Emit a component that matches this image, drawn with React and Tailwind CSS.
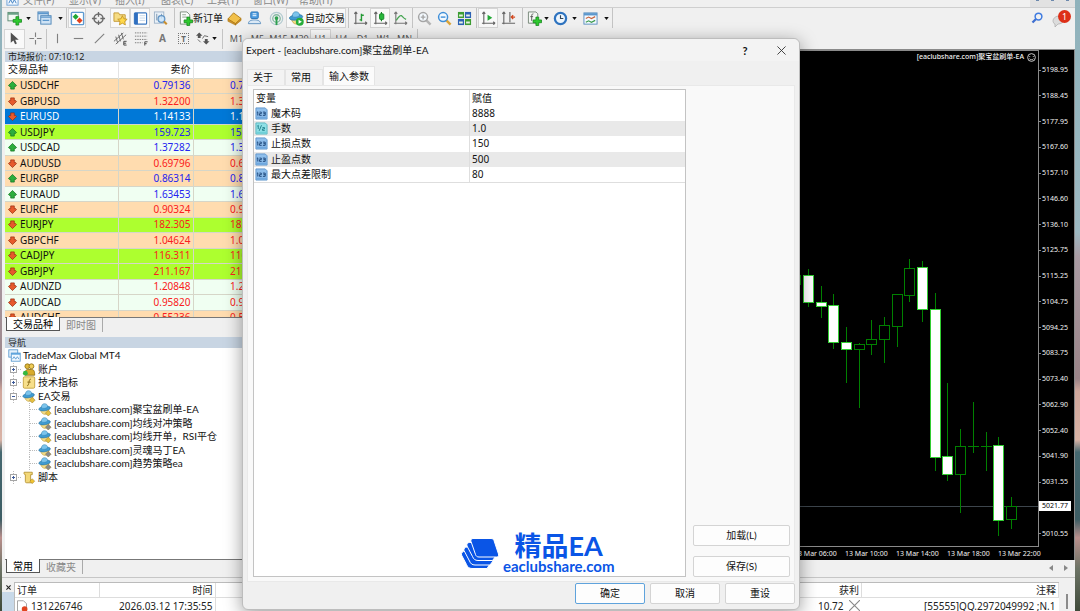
import { useState } from 'react'

const MENUS = ['文件(F)', '显示(V)', '插入(I)', '图表(C)', '工具(T)', '窗口(W)', '帮助(H)']

const TIMEFRAMES = ['M1', 'M5', 'M15', 'M30', 'H1', 'H4', 'D1', 'W1', 'MN']

const PEACH = 'bg-[#ffdcaf]'
const LIME = 'bg-[#adff2f]'
const MINT = 'bg-[#f0fff2]'

const QUOTES = [
  { symbol: 'USDCHF', bid: '0.79136', ask: '0.79161', up: true, bg: PEACH },
  { symbol: 'GBPUSD', bid: '1.32200', ask: '1.32219', up: false, bg: PEACH },
  { symbol: 'EURUSD', bid: '1.14133', ask: '1.14147', up: false, bg: 'bg-[#0078d7]', selected: true },
  { symbol: 'USDJPY', bid: '159.723', ask: '159.741', up: true, bg: LIME },
  { symbol: 'USDCAD', bid: '1.37282', ask: '1.37305', up: true, bg: MINT },
  { symbol: 'AUDUSD', bid: '0.69796', ask: '0.69814', up: false, bg: PEACH },
  { symbol: 'EURGBP', bid: '0.86314', ask: '0.86336', up: true, bg: PEACH },
  { symbol: 'EURAUD', bid: '1.63453', ask: '1.63492', up: true, bg: MINT },
  { symbol: 'EURCHF', bid: '0.90324', ask: '0.90351', up: false, bg: PEACH },
  { symbol: 'EURJPY', bid: '182.305', ask: '182.332', up: false, bg: LIME },
  { symbol: 'GBPCHF', bid: '1.04624', ask: '1.04661', up: false, bg: PEACH },
  { symbol: 'CADJPY', bid: '116.311', ask: '116.348', up: false, bg: LIME },
  { symbol: 'GBPJPY', bid: '211.167', ask: '211.204', up: false, bg: LIME },
  { symbol: 'AUDNZD', bid: '1.20848', ask: '1.20889', up: false, bg: MINT },
  { symbol: 'AUDCAD', bid: '0.95820', ask: '0.95853', up: false, bg: MINT },
  { symbol: 'AUDCHF', bid: '0.55236', ask: '0.55261', up: false, bg: PEACH },
]

const EXPERTS = [
  { name: '[eaclubshare.com]聚宝盆刷单-EA', active: true },
  { name: '[eaclubshare.com]均线对冲策略', active: false },
  { name: '[eaclubshare.com]均线开单，RSI平仓', active: true },
  { name: '[eaclubshare.com]灵魂马丁EA', active: false },
  { name: '[eaclubshare.com]趋势策略ea', active: false },
]

const PARAMS = [
  { name: '魔术码', value: '8888', type: 'int' },
  { name: '手数', value: '1.0', type: 'double' },
  { name: '止损点数', value: '150', type: 'int' },
  { name: '止盈点数', value: '500', type: 'int' },
  { name: '最大点差限制', value: '80', type: 'int' },
]

// null keeps the slot that the current price tag covers
const PRICES = [
  '5198.95', '5188.45', '5177.95', '5167.60', '5157.10', '5146.60', '5136.10', '5125.75', '5115.25',
  '5104.75', '5094.25', '5083.75', '5073.40', '5062.90', '5052.40', '5041.90', '5031.55', null, '5010.55',
]

const TIMES = ['13 Mar 06:00', '13 Mar 10:00', '13 Mar 14:00', '13 Mar 18:00', '13 Mar 22:00']

// [x, high, body top, body bottom, low, falling]
const CANDLES = [
  [-5, 222, 224, 233, 240, 0],
  [8, 218, 224, 251, 256, 1],
  [21, 235, 251, 255, 267, 1],
  [33, 243, 254, 291, 298, 1],
  [46, 276, 291, 298, 332, 1],
  [59, 292, 293, 298, 357, 0],
  [71, 269, 288, 293, 304, 0],
  [84, 266, 274, 288, 312, 0],
  [97, 243, 243, 275, 296, 0],
  [109, 208, 217, 244, 251, 0],
  [122, 210, 216, 258, 271, 1],
  [135, 242, 258, 406, 420, 1],
  [147, 332, 405, 423, 430, 1],
  [160, 378, 395, 423, 462, 0],
  [173, 351, 395, 395, 402, 0],
  [186, 381, 395, 395, 420, 0],
  [198, 386, 394, 469, 485, 1],
  [211, 446, 455, 468, 478, 0],
]

function Svg({ size = 'size-[15px]', children }) {
  return (
    <svg viewBox="0 0 16 16" className={`${size} shrink-0`} fill="none" aria-hidden="true">
      {children}
    </svg>
  )
}

function Plus({ x, y }) {
  return (
    <path
      transform={`translate(${x} ${y})`}
      d="M3 0h3v3h3v3H6v3H3V6H0V3h3z"
      fill="#2fc92f"
      stroke="#12861a"
      strokeWidth=".8"
    />
  )
}

const NewChartIcon = () => (
  <Svg>
    <rect x="1" y="1.500" width="11" height="9" fill="#f2f8f2" stroke="#5d8c74" />
    <path d="M1 3h11" stroke="#6aa286" strokeWidth="2" />
    <Plus x={6.5} y={6} />
  </Svg>
)

const ProfilesIcon = () => (
  <Svg>
    <rect x="1" y="1" width="11" height="9" fill="#dcebf8" stroke="#4f86b8" />
    <path d="M1 2.500h11" stroke="#5c97cc" strokeWidth="2" />
    <rect x="4" y="5" width="11" height="9" fill="#cfe3f5" stroke="#4f86b8" />
    <path d="M4 6.500h11M6 10h7" stroke="#5c97cc" strokeWidth="1.500" />
  </Svg>
)

const MarketIcon = () => (
  <Svg>
    <rect x="1.500" y="1.500" width="13" height="13" rx="1" fill="#fff" stroke="#5e9ad0" strokeWidth="1.500" />
    <path d="M6 3l3.200 3.200L6 9.400 2.800 6.200z" fill="#22a835" />
    <path d="M10.200 7l3.200 3.200-3.200 3.200L7 10.200z" fill="#e2431e" />
  </Svg>
)

const CrosshairIcon = () => (
  <Svg>
    <circle cx="8" cy="8" r="4.800" stroke="#6b6b6b" strokeWidth="1.600" />
    <path d="M8 1v5M8 10v5M1 8h5M10 8h5" stroke="#6b6b6b" strokeWidth="1.400" />
  </Svg>
)

const StarFolderIcon = () => (
  <Svg>
    <path d="M1 2h5l1 2h6v7H1z" fill="#f6dc83" stroke="#c49a35" />
    <path d="M10 5l1.600 3.300 3.500.5-2.600 2.400.7 3.600L10 13l-3.200 1.800.7-3.600L5 8.800l3.500-.5z" fill="#ffd84a" stroke="#b98a1c" strokeWidth=".8" />
  </Svg>
)

const NavigatorIcon = () => (
  <Svg>
    <rect x="1.500" y="2" width="13" height="12" rx="1" fill="#fff" stroke="#3c78c0" strokeWidth="1.200" />
    <path d="M3.500 2v12" stroke="#2f6fc0" strokeWidth="3.500" />
    <path d="M7 5h6M7 7.500h6M7 10h6" stroke="#c3d6ea" />
  </Svg>
)

const TesterIcon = () => (
  <Svg>
    <rect x="1.500" y="1" width="10" height="12" fill="#eaf1f8" stroke="#9fb3c8" />
    <path d="M4 3v7M6.500 5v6M9 3v5" stroke="#7a94ae" />
    <circle cx="9" cy="8.500" r="3.600" fill="#cde6fa" fillOpacity=".8" stroke="#5f93c4" strokeWidth="1.300" />
    <path d="M11.700 11.200l3 3" stroke="#c98e2e" strokeWidth="2.200" />
  </Svg>
)

const OrderIcon = () => (
  <Svg>
    <path d="M2.500 1h7l3 3v10h-10z" fill="#fbfdfb" stroke="#7d8c7d" />
    <path d="M4.500 4h4M4.500 6.500h5" stroke="#8ea08e" />
    <Plus x={6.5} y={6.5} />
  </Svg>
)

const GoldIcon = () => (
  <Svg>
    <path d="M1 8.500l6-6.500 8 6-6 5.500z" fill="#f1c04a" stroke="#b27d18" />
    <path d="M1 8.500v2.500L9 15v-1.500zM9 15l6-5V8l-6 5.500z" fill="#cf9426" stroke="#a87214" strokeWidth=".6" />
  </Svg>
)

const PersonIcon = () => (
  <Svg>
    <rect x="4" y="1" width="8" height="7" rx="1" fill="#4b9be0" stroke="#2b74b8" />
    <path d="M6 3h4M6 5h4" stroke="#fff" />
    <path d="M1.500 13.500c0-3 3-4 6.500-4s6.500 1 6.500 4z" fill="#dbe9f6" stroke="#5b8fbf" />
  </Svg>
)

const SignalIcon = () => (
  <Svg>
    <circle cx="8" cy="8" r="6.600" stroke="#b3cbd0" strokeWidth="1.300" />
    <circle cx="8" cy="8" r="4" stroke="#86b8a4" strokeWidth="1.400" />
    <circle cx="8" cy="7.500" r="2" fill="#2fa04f" />
    <path d="M8 8v7" stroke="#2fa04f" strokeWidth="2" />
  </Svg>
)

function ExpertIcon({ size, dot }) {
  return (
    <Svg size={size}>
      <path d="M2.500 8c.5 3.500 2.500 6 5.500 6s4.500-2.500 5-6z" fill="#f5dc86" stroke="#b99a3c" strokeWidth=".7" />
      <ellipse cx="7.500" cy="6.800" rx="7.200" ry="2.800" transform="rotate(-8 7.500 6.800)" fill="#3f9bd2" stroke="#276f9f" strokeWidth=".7" />
      <path d="M3.500 6C3.500 2.500 5 .8 7.300.8S11.300 2 11.300 5c-2 1.700-5.500 2.200-7.800 1z" fill="#7cc4ec" stroke="#2c7cae" strokeWidth=".6" />
      {dot === 'play' ? (
        <>
          <circle cx="11.500" cy="11.500" r="4.200" fill="#27ad3a" />
          <path d="M10.200 9.300l3.500 2.200-3.500 2.200z" fill="#fff" />
        </>
      ) : (
        <path d="M12 9l3.500 3.500L12 16l-3.500-3.500z" fill={dot} stroke="#8c7428" strokeWidth=".6" />
      )}
    </Svg>
  )
}

const BarsIcon = () => (
  <Svg>
    <path d="M3 1v13M1 13h14M3 1L1.500 3M3 1l1.500 2M15 13l-2-1.500M15 13l-2 1.500" stroke="#666" strokeWidth="1.200" />
    <path d="M9 3v8M7 9.500h2M9 4.500h2.500" stroke="#239a34" strokeWidth="1.500" />
  </Svg>
)

const CandlesIcon = () => (
  <Svg>
    <path d="M3 1v13M1 13h14M3 1L1.500 3M3 1l1.500 2M15 13l-2-1.500M15 13l-2 1.500" stroke="#666" strokeWidth="1.200" />
    <path d="M9 1v10" stroke="#168526" strokeWidth="1.200" />
    <rect x="7" y="3" width="4.500" height="6" rx="1" fill="#28b83b" stroke="#168526" />
  </Svg>
)

const LineIcon = () => (
  <Svg>
    <path d="M3 1v13M1 13h14M3 1L1.500 3M3 1l1.500 2M15 13l-2-1.500M15 13l-2 1.500" stroke="#777" strokeWidth="1.200" />
    <path d="M3.500 10C6 6 8 4.500 9 5s2 3 5 4" stroke="#46a552" strokeWidth="1.400" />
  </Svg>
)

function ZoomIcon({ color, handle, plus }) {
  return (
    <Svg>
      <path d="M9.500 9.500l5 5" stroke={handle} strokeWidth="2.600" />
      <circle cx="6.500" cy="6.500" r="4.800" fill="#f3f9fe" stroke={color} strokeWidth="1.600" />
      <path d={plus ? 'M4 6.500h5M6.500 4v5' : 'M4 6.500h5'} stroke={color} strokeWidth="1.500" />
    </Svg>
  )
}

const TileIcon = () => (
  <Svg>
    <rect x="1" y="1" width="6.500" height="6.500" fill="#3d9d33" />
    <rect x="8.500" y="1" width="6.500" height="6.500" fill="#2d62b4" />
    <rect x="1" y="8.500" width="6.500" height="6.500" fill="#2d62b4" />
    <rect x="8.500" y="8.500" width="6.500" height="6.500" fill="#3d9d33" />
    <path d="M2.200 4.800h4M9.700 4.800h4M2.200 12.300h4M9.700 12.300h4" stroke="#e6f2e2" strokeWidth="2.200" />
  </Svg>
)

const AutoScrollIcon = () => (
  <Svg>
    <path d="M3 1v13M1 13h14M3 1L1.500 3M3 1l1.500 2M15 13l-2-1.500M15 13l-2 1.500" stroke="#666" strokeWidth="1.200" />
    <path d="M7 4l5 3.200-5 3.300z" fill="#22a835" />
  </Svg>
)

const ShiftIcon = () => (
  <Svg>
    <path d="M3 1v13M1 13h14M9.500 1v11M3 1L1.500 3M3 1l1.500 2" stroke="#666" strokeWidth="1.200" />
    <path d="M15 6.500h-4M13 4.500l-2 2 2 2" stroke="#d2481f" strokeWidth="1.400" />
  </Svg>
)

const IndicatorsIcon = () => (
  <Svg>
    <path d="M1.500 1h8l2 2v10h-10z" fill="#f4f7f4" stroke="#77877a" />
    <path d="M6.800 3C5 3 5 4.500 5 6v4.500M3.500 6h3" stroke="#555" />
    <Plus x={6.5} y={6.5} />
  </Svg>
)

const ClockIcon = () => (
  <Svg>
    <circle cx="8" cy="8" r="6" fill="#eef6fd" stroke="#2f74c0" strokeWidth="2.400" />
    <path d="M8 4.500V8h3" stroke="#345" strokeWidth="1.200" />
  </Svg>
)

const TemplateIcon = () => (
  <Svg>
    <rect x="1" y="2" width="14" height="12" fill="#f5faff" stroke="#5c8fc0" />
    <path d="M1 3.500h14" stroke="#5c97cc" strokeWidth="2.500" />
    <path d="M3 8l3-1.500L9 8l4-2" stroke="#c8623a" strokeWidth="1.200" />
    <path d="M3 12l3-1.500L9 12l4-2" stroke="#3a9a4c" strokeWidth="1.200" />
  </Svg>
)

const CursorIcon = () => (
  <Svg>
    <path d="M4 1.500v11l2.800-2.400 1.800 4 1.900-.9-1.800-3.800H12.500z" fill="#505050" />
  </Svg>
)

function StrokeIcon({ d }) {
  return (
    <Svg>
      <path d={d} stroke="#808080" strokeWidth="1.200" />
    </Svg>
  )
}

const ChannelIcon = () => (
  <Svg>
    <path d="M1 11L11 2M3 14L14 4M3 6l2 7M6 4l2 7M9 2l2 7" stroke="#666" />
    <path d="M14.500 11h-3v4h3M11.500 13h2.500" stroke="#444" />
  </Svg>
)

const FiboIcon = () => (
  <Svg>
    <path d="M1 2h13M1 5.500h13M1 9h13M1 12.500h8" stroke="#777" strokeDasharray="1.500 1" />
    <path d="M11.500 15.500v-4h3M11.500 13.500h2" stroke="#444" />
  </Svg>
)

const ArrowsIcon = () => (
  <Svg>
    <path d="M4.500 1.500L8 5H6v2.500H3V5H1z" fill="#555" />
    <path d="M12 14.500L8.500 11h2V8.500h3V11h2z" fill="#555" />
    <path d="M8 8l2-3 4 1M3 9l3 3" stroke="#666" />
  </Svg>
)

const TreeMonitorIcon = () => (
  <Svg size="size-[13px]">
    <rect x="1" y="1" width="11" height="9" fill="#e6f2fc" stroke="#4d92cc" />
    <rect x="4" y="5" width="11" height="10" fill="#f2f9ff" stroke="#4d92cc" />
    <path d="M4 6h11" stroke="#5ba3dc" strokeWidth="2" />
    <path d="M5.500 12.500l2-3 2 3 2-3 2 3" stroke="#4d92cc" />
  </Svg>
)

const AccountsIcon = () => (
  <Svg size="w-[14px] h-[13px]">
    <circle cx="6" cy="4" r="3" fill="#e0b93a" stroke="#8d6c12" />
    <circle cx="11" cy="4" r="3" fill="#f0cd58" stroke="#8d6c12" />
    <path d="M3 15c0-5 1-7 4-7h4c3 0 4 2 4 7z" fill="#d8ab2c" stroke="#8d6c12" />
    <circle cx="3.500" cy="12.500" r="3" fill="#35b83f" />
  </Svg>
)

const FunctionIcon = () => (
  <Svg size="w-[14px] h-[13px]">
    <rect x="1" y="1" width="14" height="14" rx="1.500" fill="#f7df8a" stroke="#c09a33" />
    <path d="M10.500 4C8.500 3.500 8.500 5 8 7.500S7 12.500 5.500 12M6 7.500h4" stroke="#8a6a1a" strokeWidth="1.200" />
  </Svg>
)

const ScriptIcon = () => (
  <Svg size="w-[14px] h-[13px]">
    <path d="M2 1.500h10v3H10v8h3c0 1.500-.5 2-1.500 2H5c-1.500 0-1.500-1-1.500-2v-8C2 4.500 1.500 3 2 1.500z" fill="#f3d878" stroke="#b08c2c" />
    <path d="M12 9.500l3 3-3 3-3-3z" fill="#f0c330" stroke="#99761d" strokeWidth=".6" />
  </Svg>
)

function QuoteArrow({ up }) {
  return (
    <svg viewBox="0 0 10 10" className="size-[9px] shrink-0" aria-hidden="true">
      {up ? (
        <path d="M5 .5L9.500 5 8.500 6H7v3H3V6H1.500L.5 5z" fill="#2cae3d" stroke="#14701f" strokeWidth=".8" />
      ) : (
        <path d="M5 9.500L.5 5l1-1H3V1h4v3h1.500l1 1z" fill="#e65a2c" stroke="#982a0c" strokeWidth=".8" />
      )}
    </svg>
  )
}

function ParamIcon({ type }) {
  const int = type === 'int'
  return (
    <svg viewBox="0 0 14 14" className="size-[13px] shrink-0" aria-hidden="true">
      <path d="M1 1h10l2 2v10H1z" fill={int ? '#8fbfec' : '#8fe0e6'} stroke={int ? '#5f95cb' : '#56b7c0'} />
      <path d="M1.500 10.500h11v2h-11z" fill={int ? '#6ea7de' : '#6fd0d8'} />
      {int ? (
        <path d="M2 6l1-.8v4M4.800 5.500h2v1.700h-2V9h2.400M8.500 5.500h2.500V9H8.500M9 7.200h2" fill="none" stroke="#1a4478" />
      ) : (
        <path d="M2.500 4.500l1-1v4M7 3.500l-2.500 6M8 6h2.200v1.500H8V9h2.500" fill="none" stroke="#1e7f8a" />
      )}
    </svg>
  )
}

function ToolButton({ label, width = 'w-5', boxed, children }) {
  return (
    <button
      type="button"
      aria-label={label}
      className={`${width} h-5 shrink-0 flex items-center justify-center ${
        boxed ? 'bg-[#f9f9f9] border border-[#d5d5d5]' : ''
      }`}
    >
      {children}
    </button>
  )
}

function Caret({ label }) {
  return (
    <button type="button" aria-label={label} className="w-2 h-5 shrink-0 flex items-center justify-center">
      <svg viewBox="0 0 6 4" className="w-[5px] h-[3px]" aria-hidden="true">
        <path d="M0 0h6L3 4z" fill="#111" />
      </svg>
    </button>
  )
}

function Separator({ width = 'w-1' }) {
  return (
    <div className={`${width} h-5 shrink-0 flex justify-center`}>
      <div className="border-l border-[#c4c4c4]" />
    </div>
  )
}

function MenuBar() {
  return (
    <nav className="h-[7px] overflow-hidden flex items-end justify-between border-b border-[#cfcfcf] box-content">
      <div className="flex items-end pl-[4px]">
        <svg viewBox="0 0 14 14" className="size-[13px] mr-1" aria-hidden="true">
          <rect x="1" y="1" width="12" height="11" fill="#f3f9ff" stroke="#6a9fd6" />
          <path d="M3 10l2-4 2 4 2-4 2 4" fill="none" stroke="#3f7fc2" />
        </svg>
        {MENUS.map((menu) => (
          <button key={menu} type="button" className="w-[46px] h-[13px] text-left text-[10px] leading-[13px] text-[#8a8a8a] whitespace-nowrap">
            {menu}
          </button>
        ))}
      </div>
      <div className="flex h-full w-[45px] items-start justify-around bg-[#e2e2e2] text-[#6d89ad]">
        <span className="w-[3px] h-px bg-current" />
        <span className="w-[3px] h-px bg-current" />
        <span className="w-[3px] h-px bg-current" />
      </div>
    </nav>
  )
}

function MainToolbar() {
  return (
    <div className="flex items-center h-5 pl-[2px]">
      <ToolButton label="新图表"><NewChartIcon /></ToolButton>
      <Caret label="图表列表" />
      <ToolButton label="配置" width="w-6"><ProfilesIcon /></ToolButton>
      <Caret label="配置列表" />
      <Separator />
      <ToolButton label="市场报价" width="w-[18px]" boxed><MarketIcon /></ToolButton>
      <ToolButton label="数据窗口" width="w-6"><CrosshairIcon /></ToolButton>
      <ToolButton label="导航" boxed><StarFolderIcon /></ToolButton>
      <ToolButton label="终端" boxed><NavigatorIcon /></ToolButton>
      <ToolButton label="策略测试"><TesterIcon /></ToolButton>
      <Separator width="w-2" />
      <button type="button" className="w-12 h-5 shrink-0 flex items-center text-[10px] whitespace-nowrap">
        <OrderIcon />
        新订单
      </button>
      <ToolButton label="MetaEditor" width="w-4"><GoldIcon /></ToolButton>
      <ToolButton label="社区" width="w-6"><PersonIcon /></ToolButton>
      <ToolButton label="信号"><SignalIcon /></ToolButton>
      <button
        type="button"
        className="w-[60px] h-5 shrink-0 flex items-center gap-px pl-[2px] text-[10px] whitespace-nowrap bg-[#f9f9f9] border border-[#d5d5d5]"
      >
        <ExpertIcon size="size-[15px]" dot="play" />
        自动交易
      </button>
      <Separator />
      <ToolButton label="柱状图"><BarsIcon /></ToolButton>
      <ToolButton label="阴阳烛" boxed><CandlesIcon /></ToolButton>
      <ToolButton label="折线图"><LineIcon /></ToolButton>
      <Separator />
      <ToolButton label="放大"><ZoomIcon color="#a5a5a5" handle="#b5b5b5" plus /></ToolButton>
      <ToolButton label="缩小"><ZoomIcon color="#3f8fd8" handle="#dba53a" /></ToolButton>
      <ToolButton label="平铺窗口"><TileIcon /></ToolButton>
      <Separator />
      <ToolButton label="自动滚动" boxed><AutoScrollIcon /></ToolButton>
      <ToolButton label="图表平移"><ShiftIcon /></ToolButton>
      <Separator width="w-2" />
      <ToolButton label="指标" width="w-4"><IndicatorsIcon /></ToolButton>
      <Caret label="指标列表" />
      <ToolButton label="周期"><ClockIcon /></ToolButton>
      <Caret label="周期列表" />
      <ToolButton label="模板" width="w-6"><TemplateIcon /></ToolButton>
      <Caret label="模板列表" />
      <Separator />
      <div className="ml-auto mr-[4px] flex items-center gap-1">
        <ToolButton label="搜索">
          <Svg size="size-[12px]">
            <path d="M7 9l-5 5" stroke="#3f6fd0" strokeWidth="3" />
            <circle cx="10" cy="6" r="4.500" stroke="#3f7be0" strokeWidth="2" />
          </Svg>
        </ToolButton>
        <button type="button" aria-label="消息" className="relative size-5">
          <svg viewBox="0 0 20 20" className="size-5" aria-hidden="true">
            <path d="M2 13c0-3 3-5 6-5s5 2 5 4-3 4-6 4l-3 3v-3c-1 0-2-2-2-3z" fill="#dcdcdc" stroke="#aaa" strokeWidth=".7" />
          </svg>
          <span className="absolute right-0 top-[2px] size-[13px] rounded-full bg-[#dd2f17] text-center text-[9px] leading-[13px] text-white">
            1
          </span>
        </button>
      </div>
    </div>
  )
}

function DrawToolbar() {
  const [frame, setFrame] = useState('H1')
  return (
    <div className="flex items-center h-[21px] pl-[2px]">
      <ToolButton label="光标" width="w-[21px]" boxed><CursorIcon /></ToolButton>
      <ToolButton label="十字准线" width="w-[21px]"><StrokeIcon d="M8 1.500v5M8 9.500v5M1.500 8h5M9.500 8h5" /></ToolButton>
      <Separator width="w-px" />
      <ToolButton label="垂直线" width="w-[21px]"><StrokeIcon d="M8 3v10" /></ToolButton>
      <ToolButton label="水平线" width="w-[21px]"><StrokeIcon d="M3 8h10" /></ToolButton>
      <ToolButton label="趋势线" width="w-[21px]"><StrokeIcon d="M3 13L13 3" /></ToolButton>
      <ToolButton label="等距通道" width="w-[21px]"><ChannelIcon /></ToolButton>
      <ToolButton label="斐波那契" width="w-[21px]"><FiboIcon /></ToolButton>
      <ToolButton label="文字" width="w-[21px]">
        <span className="text-[10px] font-bold text-[#777]">A</span>
      </ToolButton>
      <ToolButton label="文字标签" width="w-[21px]">
        <span className="w-[11px] h-[11px] border border-dotted border-[#777] text-[8px] leading-[9px] font-bold text-[#666]">T</span>
      </ToolButton>
      <ToolButton label="箭头" width="w-4"><ArrowsIcon /></ToolButton>
      <Caret label="箭头列表" />
      <Separator width="w-2" />
      {TIMEFRAMES.map((tf) => (
        <button
          key={tf}
          type="button"
          onClick={() => setFrame(tf)}
          className={`w-[21px] h-5 shrink-0 text-center text-[9px] text-[#555] ${
            frame === tf ? 'bg-[#f9f9f9] border border-[#d5d5d5]' : ''
          }`}
        >
          {tf}
        </button>
      ))}
      <Separator />
    </div>
  )
}

function PanelTitle({ children }) {
  return (
    <h2 className="h-[11px] shrink-0 px-[3px] bg-[#c8d5e3] text-[9px] leading-[11px] text-[#222] whitespace-nowrap">
      {children}
    </h2>
  )
}

function PanelTabs({ tabs }) {
  const [active, setActive] = useState(tabs[0])
  return (
    <div className="flex h-[15px] shrink-0 pl-px border-t border-[#777] bg-[#f0f0f0]">
      {tabs.map((tab) => (
        <button
          key={tab}
          type="button"
          onClick={() => setActive(tab)}
          className={`h-[14px] px-[6px] text-[10px] leading-[12px] ${
            tab === active
              ? '-mt-px bg-white border border-t-0 border-[#555] text-black'
              : 'text-[#888] border-r border-[#aaa]'
          }`}
        >
          {tab}
        </button>
      ))}
    </div>
  )
}

function MarketWatch() {
  return (
    <section className="flex h-[281px] shrink-0 flex-col">
      <PanelTitle>市场报价: 07:10:12</PanelTitle>
      <div className="flex-1 overflow-hidden bg-white">
        <table className="w-full h-[263px] table-fixed border-collapse text-[10px] leading-[13px]">
          <thead>
            <tr className="h-4 text-left">
              <th className="w-[113px] p-0 pl-[3px] font-normal border-r border-[#e3e3e3]">交易品种</th>
              <th className="w-[75px] p-0 pr-[2px] text-right font-normal border-r border-[#e3e3e3]">卖价</th>
              <th className="p-0" aria-label="买价" />
            </tr>
          </thead>
          <tbody>
            {QUOTES.map((q) => {
              const color = q.selected ? 'text-white' : q.up ? 'text-[#2424f0]' : 'text-[#fa2020]'
              return (
                <tr key={q.symbol} className={`${q.bg} border-t border-[#d6d6c8]`}>
                  <td className={`p-0 pl-[3px] border-r border-[#d6d6c8] ${q.selected ? 'text-white' : 'text-[#111]'}`}>
                    <span className="flex items-center gap-[3px]">
                      <QuoteArrow up={q.up} />
                      {q.symbol}
                    </span>
                  </td>
                  <td className={`p-0 pr-[2px] text-right border-r border-[#d6d6c8] ${color}`}>{q.bid}</td>
                  <td className={`p-0 pr-[2px] text-right ${color}`}>{q.ask}</td>
                </tr>
              )
            })}
          </tbody>
        </table>
      </div>
      <PanelTabs tabs={['交易品种', '即时图']} />
    </section>
  )
}

function Expander({ open }) {
  return (
    <svg viewBox="0 0 14 13" className="w-[14px] h-[13px] shrink-0" aria-hidden="true">
      <path d="M5.500 0v13M10 6.500h4" stroke="#bbb" strokeDasharray="1 1" />
      <rect x="2.500" y="3.500" width="6" height="6" fill="#fff" stroke="#a5a5a5" />
      <path d={open ? 'M4 6.500h3' : 'M4 6.500h3M5.500 5v3'} stroke="#3c5a9a" />
    </svg>
  )
}

function TreeRow({ icon, children }) {
  return (
    <li className="flex flex-1 items-center gap-[2px] whitespace-nowrap">
      <span className="flex items-center">{icon}</span>
      {children}
    </li>
  )
}

function Navigator() {
  return (
    <section className="flex flex-1 min-h-0 flex-col">
      <PanelTitle>导航</PanelTitle>
      <div className="flex-1 min-h-0 overflow-hidden bg-white pt-px">
        <ul className="flex flex-col h-[135px] pl-[3px] font-[Lato,'Noto_Sans_CJK_SC',sans-serif] text-[10px] leading-[13px] text-[#111]">
          <TreeRow icon={<TreeMonitorIcon />}>TradeMax Global MT4</TreeRow>
          <TreeRow icon={<><Expander /><AccountsIcon /></>}>账户</TreeRow>
          <TreeRow icon={<><Expander /><FunctionIcon /></>}>技术指标</TreeRow>
          <TreeRow icon={<><Expander open /><ExpertIcon size="w-[14px] h-[13px]" dot="#e6c040" /></>}>EA交易</TreeRow>
          {EXPERTS.map((ea) => (
            <TreeRow
              key={ea.name}
              icon={
                <>
                  <svg viewBox="0 0 30 13" className="w-[30px] h-[13px] shrink-0" aria-hidden="true">
                    <path d="M21.500 0v13M22 6.500h8" stroke="#bbb" strokeDasharray="1 1" />
                  </svg>
                  <ExpertIcon size="w-[14px] h-[13px]" dot={ea.active ? '#e6c040' : '#8a8a8a'} />
                </>
              }
            >
              {ea.name}
            </TreeRow>
          ))}
          <TreeRow icon={<><Expander /><ScriptIcon /></>}>脚本</TreeRow>
        </ul>
      </div>
      <PanelTabs tabs={['常用', '收藏夹']} />
    </section>
  )
}

function Candle({ candle: [x, high, top, bottom, low, falling] }) {
  return (
    <g stroke="#008000">
      <path d={`M${x + 0.5} ${high}V${low}`} />
      {top === bottom ? (
        <path d={`M${x - 5} ${top + 0.5}h11`} />
      ) : (
        <rect
          x={x - 4.5}
          y={top + 0.5}
          width="10"
          height={bottom - top}
          fill={falling ? '#fff' : '#000'}
          stroke={falling ? '#32cd32' : '#008000'}
        />
      )}
    </g>
  )
}

function Chart() {
  return (
    <section className="flex flex-1 min-w-0 flex-col">
      <div className="relative flex h-[511px] flex-col overflow-hidden border-t border-r border-[#8a8a8a] bg-black font-['Noto_Sans','Noto_Sans_CJK_SC',sans-serif] text-[7px] leading-[10px] text-[#f2f2f2]">
        <div className="flex flex-1 min-h-0">
          <div className="flex flex-1 min-w-0 flex-col items-end overflow-hidden border-t border-r border-b border-[#8a8a8a]">
            <svg viewBox="0 0 238 496" className="w-[238px] h-[496px] shrink-0" aria-label="H1">
              <path d="M0 455.500h238" stroke="#3d454c" />
              {CANDLES.map((candle) => (
                <Candle key={candle[0]} candle={candle} />
              ))}
            </svg>
          </div>
          <ul className="flex w-[35px] shrink-0 flex-col justify-between pt-[15px] pb-[8px]">
            {PRICES.map((price, i) => (
              <li key={i} className="flex h-[10px] items-center gap-px">
                {price && <span className="w-[2px] h-px bg-[#8a8a8a]" />}
                {price}
              </li>
            ))}
          </ul>
        </div>
        <ul className="flex h-[13px] shrink-0 justify-end whitespace-nowrap leading-[13px]">
          {TIMES.map((time) => (
            <li key={time} className="w-[51px] shrink-0 last:w-[76px]">{time}</li>
          ))}
        </ul>
        <div className="absolute right-[38px] top-[2px] flex items-center gap-[3px] text-[7px] font-medium">
          [eaclubshare.com]聚宝盆刷单-EA
          <svg viewBox="0 0 10 10" className="size-[9px]" fill="none" stroke="#ddd" aria-hidden="true">
            <circle cx="5" cy="5" r="4.300" />
            <path d="M3 3.500v1M7 3.500v1M2.800 6.300c1 1.500 3.400 1.500 4.400 0" />
          </svg>
        </div>
        <div className="absolute right-[3px] top-[451px] w-[32px] bg-white pl-[3px] text-black">5021.77</div>
      </div>
      <div className="flex h-4 items-center justify-end gap-[11px] pr-[7px] text-[#888]">
        <button type="button" aria-label="上一个">
          <svg viewBox="0 0 4 6" className="w-[4px] h-[6px]" aria-hidden="true"><path d="M4 0v6L0 3z" fill="currentColor" /></svg>
        </button>
        <button type="button" aria-label="下一个">
          <svg viewBox="0 0 4 6" className="w-[4px] h-[6px]" aria-hidden="true"><path d="M0 0v6l4-3z" fill="currentColor" /></svg>
        </button>
      </div>
    </section>
  )
}

function Terminal() {
  return (
    <section className="flex h-[34px] shrink-0 border-t border-[#c6c6c6] pt-[4px]">
      <div className="flex w-[12px] shrink-0 flex-col">
        <button type="button" aria-label="关闭" className="flex h-[10px] items-center justify-center">
          <svg viewBox="0 0 6 6" className="size-[5px]" aria-hidden="true"><path d="M.5.5l5 5M5.500.5l-5 5" stroke="#222" strokeWidth="1.300" /></svg>
        </button>
        <div className="flex-1 bg-[#c8d9e9]" />
      </div>
      <div className="flex-1 overflow-hidden border-t border-l border-[#bbb] bg-white">
        <table className="w-full h-[30px] table-fixed border-collapse text-[10px] leading-[14px] whitespace-nowrap text-[#222]">
          <thead>
            <tr className="border-b border-[#ddd]">
              <th className="w-[84px] p-0 pl-[2px] text-left font-normal border-r border-[#ddd]">订单</th>
              <th className="w-[116px] p-0 pr-[2px] text-right font-normal border-r border-[#ddd]">时间</th>
              <th className="p-0 pr-[2px] text-right font-normal border-r border-[#ddd]">获利</th>
              <th className="w-[197px] p-0 pr-[2px] text-right font-normal border-r border-[#ddd]">注释</th>
            </tr>
          </thead>
          <tbody>
            <tr>
              <td className="p-0 pl-px">
                <span className="flex items-center gap-[3px]">
                  <Svg size="size-[12px]">
                    <path d="M2 1h8l4 4v10H2z" fill="#fff" stroke="#888" />
                    <circle cx="11.500" cy="12" r="3.800" fill="#e0431f" />
                  </Svg>
                  131226746
                </span>
              </td>
              <td className="p-0 pr-[2px] text-right border-r border-[#ddd]">2026.03.12 17:35:55</td>
              <td className="p-0 pr-[2px]">
                <span className="flex items-center justify-end gap-[5px]">
                  10.72
                  <svg viewBox="0 0 10 10" className="size-[11px]" aria-hidden="true"><path d="M0 0l10 10M10 0L0 10" stroke="#888" /></svg>
                </span>
              </td>
              <td className="p-0 pr-[3px] text-right">[55555]QQ.2972049992 ;N.1</td>
            </tr>
          </tbody>
        </table>
      </div>
      <div className="flex w-4 shrink-0 justify-center pt-[12px]">
        <div className="w-[2px] h-[15px] bg-[#8b8b8b]" />
      </div>
    </section>
  )
}

function DialogButton({ primary, children }) {
  return (
    <button
      type="button"
      className={`h-[21px] rounded-[2px] border bg-[#fdfdfd] text-[10px] leading-[13px] text-[#111] ${
        primary ? 'border-[#5fa3dc]' : 'border-[#d4d4d4]'
      }`}
    >
      {children}
    </button>
  )
}

function Watermark() {
  return (
    <div className="flex items-center gap-1 pb-[2px] pl-[207px] text-[#0a55e6]">
      <svg viewBox="0 0 38 32" className="w-[38px] h-[32px] shrink-0" aria-hidden="true">
        <g fill="#0a55e6" stroke="#fff">
          <path d="M4 13h18c2 0 2.500 1 3 2l4 11-3 4.500H11c-3 0-4.500-1.500-5.500-4L.5 17c-.5-2 1.500-4 3.500-4z" />
          <path d="M6 9h18c2 0 2.500 1 3 2l5 12-3 4H14c-3 0-4.500-1.500-5.500-4L3 12.500C2.500 10.500 4 9 6 9z" />
          <path d="M8.500 4.500h18c2 0 2.500 1 3 2l5 12-3 4H17c-3 0-4.500-1.500-5.500-4L6 8c-.5-2 .5-3.500 2.500-3.500z" />
          <path d="M12 .5h18c2 0 2.500 1 3 2L37.500 16c.5 2-.5 3-2 3H18c-2 0-3-1-3.500-2.500L10 3.500c-.5-2 .5-3 2-3z" />
        </g>
      </svg>
      <div className="flex flex-col items-center font-bold whitespace-nowrap">
        <span className="text-[27px] leading-[24px]">精品EA</span>
        <span className="text-[15px] leading-[16px]">eaclubshare.com</span>
      </div>
    </div>
  )
}

function ExpertDialog() {
  const [tab, setTab] = useState('输入参数')
  return (
    <div
      role="dialog"
      aria-label="Expert"
      className="absolute left-[242px] right-[280px] top-[38px] bottom-px flex flex-col rounded-[6px] border border-[#bdbdbd] bg-[#f0f0f0] px-[4px] pb-[5px] font-[Lato,'Noto_Sans_CJK_SC',sans-serif] text-[10px] leading-[13px] text-[#111] shadow-[0_4px_18px_rgba(0,0,0,0.4)]"
    >
      <header className="-mx-[4px] flex h-[22px] shrink-0 items-center rounded-t-[6px] bg-[#f3f3f3] pl-[3px]">
        <h1 className="flex-1">Expert - [eaclubshare.com]聚宝盆刷单-EA</h1>
        <button type="button" aria-label="帮助" className="w-9 text-[11px] font-bold">?</button>
        <button type="button" aria-label="关闭" className="flex w-9 justify-center">
          <svg viewBox="0 0 10 10" className="size-[9px]" aria-hidden="true"><path d="M.5.5l9 9M9.500.5l-9 9" stroke="#333" /></svg>
        </button>
      </header>
      <div className="flex h-6 shrink-0 items-end">
        {['关于', '常用', '输入参数'].map((name) => (
          <button
            key={name}
            type="button"
            onClick={() => setTab(name)}
            className={`px-[5px] border border-b-0 border-[#e4e4e4] ${
              name === tab ? 'h-[19px] bg-[#fbfbfb]' : 'h-[16px] w-[38px] text-left bg-[#f3f3f3]'
            }`}
          >
            {name}
          </button>
        ))}
      </div>
      <div className="flex flex-1 min-h-0 gap-[7px] border border-[#e9e9e9] bg-[#f9f9f9] pt-[3px] pr-[4px] pb-[4px] pl-[5px]">
        <div className="flex flex-1 flex-col justify-between border border-[#c3c3c3] bg-white">
          <table className="h-[93px] w-full table-fixed border-collapse">
            <thead>
              <tr className="h-4 text-left">
                <th className="w-1/2 p-0 pl-[2px] font-normal border-r border-[#dedede]">变量</th>
                <th className="p-0 pl-[2px] font-normal">赋值</th>
              </tr>
            </thead>
            <tbody>
              {PARAMS.map((p) => (
                <tr key={p.name} className="even:bg-[#e9e9e9] last:border-b border-[#dedede]">
                  <td className="p-0 pl-px border-r border-[#dedede]">
                    <span className="flex items-center gap-[3px]">
                      <ParamIcon type={p.type} />
                      {p.name}
                    </span>
                  </td>
                  <td className="p-0 pl-[2px] font-['Noto_Sans',sans-serif]">{p.value}</td>
                </tr>
              ))}
            </tbody>
          </table>
          <Watermark />
        </div>
        <div className="flex w-[97px] shrink-0 flex-col justify-end gap-[10px]">
          <DialogButton>加载(L)</DialogButton>
          <DialogButton>保存(S)</DialogButton>
        </div>
      </div>
      <footer className="grid shrink-0 grid-cols-[70px_70px_70px] justify-end gap-[5px] pt-px">
        <DialogButton primary>确定</DialogButton>
        <DialogButton>取消</DialogButton>
        <DialogButton>重设</DialogButton>
      </footer>
    </div>
  )
}

export default function App() {
  return (
    <div className="relative flex h-screen overflow-hidden bg-[linear-gradient(#8fb2bb_0%,#9db9c2_38%,#a99ba3_42%,#9b8488_62%,#d0a79c_64%,#d9b3a6_72%,#456870_74%,#3d5d64_85%,#b98f8c_88%,#6d7466_93%,#3f4a3a_100%)] pl-[2px] pr-[5px] font-['Noto_Sans','Noto_Sans_CJK_SC',sans-serif] text-[#111]">
      <main className="flex flex-1 min-w-0 flex-col bg-[#f0f0f0]">
        <MenuBar />
        <MainToolbar />
        <DrawToolbar />
        <div className="flex flex-1 min-h-0">
          <div className="ml-[3px] flex w-[264px] shrink-0 flex-col gap-[5px] pt-[2px] pb-[3px]">
            <MarketWatch />
            <Navigator />
          </div>
          <Chart />
        </div>
        <Terminal />
      </main>
      <ExpertDialog />
    </div>
  )
}
